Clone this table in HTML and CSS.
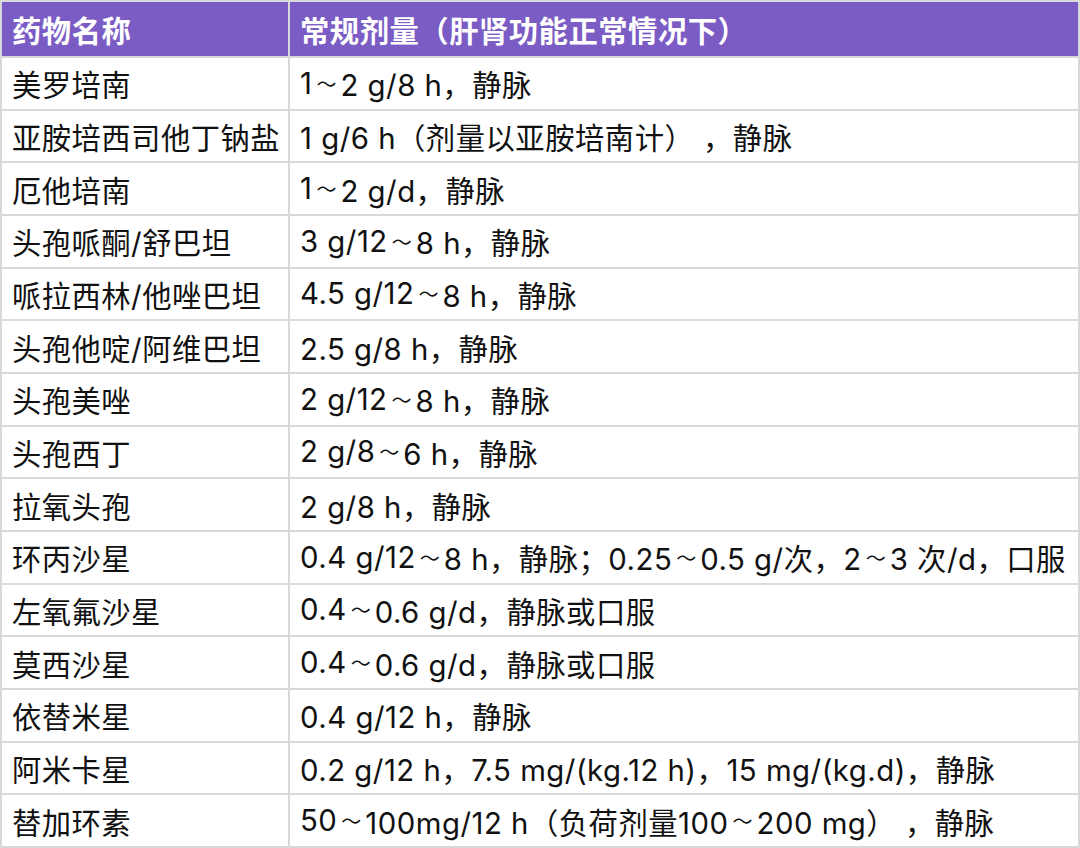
FILE: index.html
```html
<!DOCTYPE html>
<html lang="zh-CN">
<head>
<meta charset="utf-8">
<link rel="stylesheet" href="styles.css">
</head>
<body>
<div class="table">
  <div class="cell head">药物名称</div>
  <div class="cell head">常规剂量（肝肾功能正常情况下）</div>
  <div class="cell name">美罗培南</div>
  <div class="cell">1<span class="tl">～</span>2 g/8 h，静脉</div>
  <div class="cell name">亚胺培西司他丁钠盐</div>
  <div class="cell">1 g/6 h（剂量以亚胺培南计） ，静脉</div>
  <div class="cell name">厄他培南</div>
  <div class="cell">1<span class="tl">～</span>2 g/d，静脉</div>
  <div class="cell name">头孢哌酮/舒巴坦</div>
  <div class="cell">3 g/12<span class="tl">～</span>8 h，静脉</div>
  <div class="cell name">哌拉西林/他唑巴坦</div>
  <div class="cell">4.5 g/12<span class="tl">～</span>8 h，静脉</div>
  <div class="cell name">头孢他啶/阿维巴坦</div>
  <div class="cell">2.5 g/8 h，静脉</div>
  <div class="cell name">头孢美唑</div>
  <div class="cell">2 g/12<span class="tl">～</span>8 h，静脉</div>
  <div class="cell name">头孢西丁</div>
  <div class="cell">2 g/8<span class="tl">～</span>6 h，静脉</div>
  <div class="cell name">拉氧头孢</div>
  <div class="cell">2 g/8 h，静脉</div>
  <div class="cell name">环丙沙星</div>
  <div class="cell">0.4 g/12<span class="tl">～</span>8 h，静脉；0.25<span class="tl">～</span>0.5 g/次，2<span class="tl">～</span>3 次/d，口服</div>
  <div class="cell name">左氧氟沙星</div>
  <div class="cell">0.4<span class="tl">～</span>0.6 g/d，静脉或口服</div>
  <div class="cell name">莫西沙星</div>
  <div class="cell">0.4<span class="tl">～</span>0.6 g/d，静脉或口服</div>
  <div class="cell name">依替米星</div>
  <div class="cell">0.4 g/12 h，静脉</div>
  <div class="cell name">阿米卡星</div>
  <div class="cell">0.2 g/12 h，7.5 mg/(kg.12 h)，15 mg/(kg.d)，静脉</div>
  <div class="cell name">替加环素</div>
  <div class="cell">50<span class="tl">～</span>100mg/12 h（负荷剂量100<span class="tl">～</span>200 mg） ，静脉</div>
</div>
</body>
</html>
```
FILE: styles.css
```css
html, body {
  margin: 0;
  padding: 0;
  background: #ffffff;
}
.table {
  width: 1080px;
  height: 848px;
  box-sizing: border-box;
  padding: 2px;
  background: #d9d9d9;
  display: grid;
  grid-template-columns: 286px 1fr;
  grid-template-rows: 54px repeat(15, 1fr);
  gap: 2px;
  font-family: "Inter", "Noto Sans CJK SC", sans-serif;
  font-size: 29.33px;
  color: #111111;
}
.cell {
  background: #ffffff;
  display: flex;
  align-items: center;
  padding: 0 0 0 10px;
  white-space: pre;
  overflow: hidden;
  letter-spacing: 0.5px;
}
.name {
  letter-spacing: 0.45px;
}
.tl {
  display: inline-block;
  width: 28px;
  text-align: center;
  font-family: "Noto Sans CJK SC", sans-serif;
  font-size: 20px;
  letter-spacing: 0;
}
.head {
  background: #7b5bc4;
  color: #ffffff;
  font-weight: bold;
  letter-spacing: 0.5px;
  font-family: "Noto Sans CJK SC", sans-serif;
}
```
